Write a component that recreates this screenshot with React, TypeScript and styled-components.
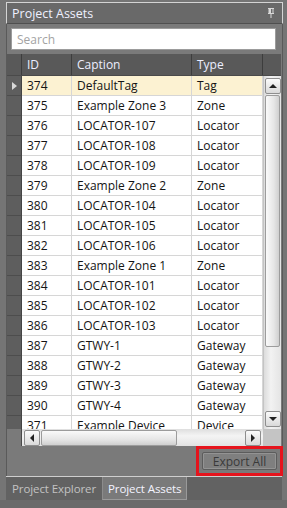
import React from 'react';
import styled, { createGlobalStyle } from 'styled-components';

const GlobalStyle = createGlobalStyle`
  html, body {
    margin: 0;
    padding: 0;
    background: #747474;
  }
  * {
    box-sizing: border-box;
  }
`;

const Page = styled.div`
  width: 287px;
  height: 508px;
  padding: 2px 4px 0 6px;
  background: #757575;
  font-family: "Open Sans", "Noto Sans", sans-serif;
  display: flex;
  flex-direction: column;
  overflow: hidden;
`;

const TitleBar = styled.div`
  height: 22px;
  display: flex;
  align-items: center;
  justify-content: space-between;
  padding: 0 7px 0 5px;
  background: #696969;
  border: 1px solid #d4d4d4;
  border-bottom: 1px solid #4f4f4f;
  color: #eef0ff;
  font-size: 12.5px;
`;

const Body = styled.div`
  flex: 1;
  display: flex;
  flex-direction: column;
  background: #7a7a7a;
  border-left: 1px solid #5a5a5a;
  border-right: 1px solid #5a5a5a;
  padding: 4px 1px 0 0;
`;

const SearchBox = styled.input`
  margin: 0 5px 0 4px;
  height: 22px;
  border: 1px solid #9c9c9c;
  background: #fff;
  padding: 0 5px;
  font-family: inherit;
  font-size: 12px;
  outline: none;
  &::placeholder {
    color: #a3a3a3;
  }
`;

const Grid = styled.div`
  margin-top: 4px;
  height: 392px;
  display: flex;
  flex-direction: column;
`;

const HeaderRow = styled.div`
  height: 22px;
  display: flex;
  background: #595959;
  border-bottom: 1px solid #4a4a4a;
`;

const HeaderCell = styled.div<{ $w: number }>`
  width: ${p => p.$w}px;
  flex: none;
  display: flex;
  align-items: center;
  padding-left: 5px;
  border-right: 1px solid #3d3d3d;
  color: #eceeff;
  font-size: 12px;
`;

const HeaderFill = styled.div`
  flex: 1;
`;

const GridBody = styled.div`
  height: 353px;
  display: flex;
`;

const Viewport = styled.div`
  flex: 1;
  overflow: hidden;
  display: flex;
  flex-direction: column;
`;

const Row = styled.div<{ $sel?: boolean }>`
  height: 20px;
  flex: none;
  display: flex;
  background: ${p => (p.$sel ? '#fcf2d2' : '#ffffff')};
`;

const RowHead = styled.div`
  width: 15px;
  flex: none;
  display: flex;
  align-items: center;
  justify-content: center;
  background: #5e5e5e;
  border-bottom: 1px solid #4d4d4d;
  border-right: 1px solid #444;
`;

const Arrow = styled.span`
  width: 0;
  height: 0;
  border-top: 4px solid transparent;
  border-bottom: 4px solid transparent;
  border-left: 5px solid #d8d8d8;
  margin-left: 1px;
`;

const Cell = styled.div<{ $w: number }>`
  width: ${p => p.$w}px;
  flex: none;
  display: flex;
  align-items: center;
  padding-left: 5px;
  border-right: 1px solid #d6d6d6;
  border-bottom: 1px solid #d6d6d6;
  color: #141414;
  font-size: 12px;
  white-space: nowrap;
  overflow: hidden;
`;

const VScroll = styled.div`
  width: 18px;
  flex: none;
  display: flex;
  flex-direction: column;
  gap: 1px;
  padding: 2px 1px 2px 1px;
  background: linear-gradient(to right, #dcdcdc, #f2f2f2 40%, #e4e4e4);
  border-left: 1px solid #c4c4c4;
`;

const ScrollBtn = styled.div`
  width: 16px;
  height: 16px;
  flex: none;
  display: flex;
  align-items: center;
  justify-content: center;
  border: 1px solid #8e8e8e;
  border-radius: 2px;
  background: linear-gradient(#fbfbfb, #d9d9d9);
`;

const Tri = styled.span<{ $dir: 'up' | 'down' | 'left' | 'right' }>`
  width: 0;
  height: 0;
  ${p =>
    p.$dir === 'up'
      ? 'border-left:4px solid transparent;border-right:4px solid transparent;border-bottom:4px solid #222;'
      : p.$dir === 'down'
      ? 'border-left:4px solid transparent;border-right:4px solid transparent;border-top:4px solid #222;'
      : p.$dir === 'left'
      ? 'border-top:4px solid transparent;border-bottom:4px solid transparent;border-right:4px solid #222;'
      : 'border-top:4px solid transparent;border-bottom:4px solid transparent;border-left:4px solid #222;'}
`;

const VThumb = styled.div`
  height: 252px;
  flex: none;
  border: 1px solid #9c9c9c;
  border-radius: 2px;
  background: linear-gradient(to right, #fafafa, #e6e6e6 60%, #cfcfcf);
`;

const TrackFill = styled.div`
  flex: 1;
`;

const BottomRow = styled.div`
  height: 17px;
  display: flex;
`;

const BottomSpacer = styled.div`
  width: 15px;
  flex: none;
  border-right: 1px solid #4a4a4a;
`;

const HScroll = styled.div`
  flex: 1;
  display: flex;
  gap: 1px;
  padding: 1px 2px 0 2px;
  background: linear-gradient(#dedede, #f4f4f4 40%, #e2e2e2);
`;

const HThumb = styled.div`
  width: 136px;
  flex: none;
  border: 1px solid #9c9c9c;
  border-radius: 2px;
  background: linear-gradient(#fafafa, #e6e6e6 60%, #cfcfcf);
`;

const Corner = styled.div`
  width: 18px;
  flex: none;
  background: #c4c4c4;
`;

const Actions = styled.div`
  height: 30px;
  display: flex;
  justify-content: flex-end;
  margin-right: -2px;
`;

const Highlight = styled.div`
  border: 3px solid #e5141d;
  padding: 3px;
  display: flex;
`;

const ExportButton = styled.button`
  width: 75px;
  height: 18px;
  padding: 0;
  background: #7f7f7f;
  border: 1px solid #5c5c5c;
  box-shadow: inset 0 0 0 1px #939393;
  border-radius: 2px;
  color: #3a3a3a;
  font-family: inherit;
  font-size: 12px;
`;

const TabStrip = styled.div`
  height: 24px;
  display: flex;
  border-top: 1px solid #cfcfcf;
  background: #626262;
  margin-right: 1px;
`;

const Tab = styled.div<{ $active?: boolean }>`
  height: 23px;
  display: flex;
  align-items: center;
  padding: 0 ${p => (p.$active ? '5px' : '6px')};
  font-size: 11.5px;
  letter-spacing: -0.1px;
  color: ${p => (p.$active ? '#f4f4ff' : '#c2c2c2')};
  background: ${p => (p.$active ? '#7a7a7a' : '#626262')};
  border-left: ${p => (p.$active ? '1px solid #8c8c8c' : 'none')};
  border-right: ${p => (p.$active ? '1px solid #9a9a9a' : 'none')};
  border-bottom: ${p => (p.$active ? '1px solid #9a9a9a' : 'none')};
`;

const Footer = styled.div`
  flex: 1;
  background: #6b6b6b;
  margin-left: -6px;
  margin-right: -4px;
`;

const PinIcon = () => (
  <svg width="8" height="10" viewBox="0 0 8 10">
    <path d="M1 0.5h6M2 1v4M6 1v4M1 5.5h6M4 6v4" stroke="#d8d8d8" strokeWidth="1" fill="none" />
    <rect x="2" y="1" width="2" height="4" fill="#d8d8d8" />
  </svg>
);

const rows: [string, string, string][] = [
  ['374', 'DefaultTag', 'Tag'],
  ['375', 'Example Zone 3', 'Zone'],
  ['376', 'LOCATOR-107', 'Locator'],
  ['377', 'LOCATOR-108', 'Locator'],
  ['378', 'LOCATOR-109', 'Locator'],
  ['379', 'Example Zone 2', 'Zone'],
  ['380', 'LOCATOR-104', 'Locator'],
  ['381', 'LOCATOR-105', 'Locator'],
  ['382', 'LOCATOR-106', 'Locator'],
  ['383', 'Example Zone 1', 'Zone'],
  ['384', 'LOCATOR-101', 'Locator'],
  ['385', 'LOCATOR-102', 'Locator'],
  ['386', 'LOCATOR-103', 'Locator'],
  ['387', 'GTWY-1', 'Gateway'],
  ['388', 'GTWY-2', 'Gateway'],
  ['389', 'GTWY-3', 'Gateway'],
  ['390', 'GTWY-4', 'Gateway'],
  ['371', 'Example Device', 'Device'],
];

const App: React.FC = () => {
  return (
    <Page>
      <GlobalStyle />
      <TitleBar>
        <span>Project Assets</span>
        <PinIcon />
      </TitleBar>
      <Body>
        <SearchBox placeholder="Search" />
        <Grid>
          <HeaderRow>
            <HeaderCell $w={15} />
            <HeaderCell $w={50}>ID</HeaderCell>
            <HeaderCell $w={120}>Caption</HeaderCell>
            <HeaderCell $w={71}>Type</HeaderCell>
            <HeaderFill />
          </HeaderRow>
          <GridBody>
            <Viewport>
              {rows.map(([id, caption, type], i) => (
                <Row key={id} $sel={i === 0}>
                  <RowHead>{i === 0 && <Arrow />}</RowHead>
                  <Cell $w={50}>{id}</Cell>
                  <Cell $w={120}>{caption}</Cell>
                  <Cell $w={71}>{type}</Cell>
                </Row>
              ))}
            </Viewport>
            <VScroll>
              <ScrollBtn>
                <Tri $dir="up" />
              </ScrollBtn>
              <VThumb />
              <TrackFill />
              <ScrollBtn>
                <Tri $dir="down" />
              </ScrollBtn>
            </VScroll>
          </GridBody>
          <BottomRow>
            <BottomSpacer />
            <HScroll>
              <ScrollBtn>
                <Tri $dir="left" />
              </ScrollBtn>
              <HThumb />
              <TrackFill />
              <ScrollBtn>
                <Tri $dir="right" />
              </ScrollBtn>
            </HScroll>
            <Corner />
          </BottomRow>
        </Grid>
        <Actions>
          <Highlight>
            <ExportButton>Export All</ExportButton>
          </Highlight>
        </Actions>
      </Body>
      <TabStrip>
        <Tab>Project Explorer</Tab>
        <Tab $active>Project Assets</Tab>
      </TabStrip>
      <Footer />
    </Page>
  );
};

export default App;
